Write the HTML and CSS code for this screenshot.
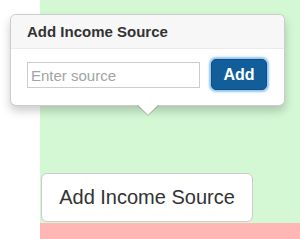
FILE: index.html
```html
<!DOCTYPE html>
<html lang="en">
<head>
  <meta charset="UTF-8">
  <title>Add Income Source</title>
  <link rel="stylesheet" href="styles.css">
</head>
<body>
  <div class="page">
    <div class="gutter"></div>
    <div class="main">
      <div class="stage">
        <button class="btn-open">Add Income Source</button>
      </div>
      <div class="strip"></div>
    </div>

    <!-- popover -->
    <div class="popover">
      <h3 class="popover-title">Add Income Source</h3>
      <div class="popover-content">
        <input type="text" class="source-input" placeholder="Enter source">
        <button class="btn-add">Add</button>
      </div>
      <div class="arrow"></div>
    </div>
  </div>
</body>
</html>
```

FILE: styles.css
```css
body { margin:0; font-family:"Liberation Sans", Arial, sans-serif; color:#333; background:#fff; }
.page { position:relative; display:flex; height:239px; overflow:hidden; }
.gutter { width:40px; flex:none; background:#fff; }
.main { flex:1; display:flex; flex-direction:column; }
.stage { height:223px; box-sizing:border-box; padding:173px 0 0 1px; background:#d4f7d4; }
.strip { flex:1; background:#ffb6b4; }

.btn-open { display:block; width:212px; height:49px; box-sizing:border-box; background:#fff; border:1px solid #ccc; border-radius:6px; font-family:inherit; font-size:20px; color:#333; padding:0; }

.popover { position:absolute; left:10px; top:14px; width:275px; box-sizing:border-box; background:#fff; border:1px solid rgba(0,0,0,.2); border-radius:6px; box-shadow:0 5px 10px rgba(0,0,0,.2); }
.popover-title { margin:0; padding:8px 16px; font-size:15px; line-height:17px; font-weight:bold; background:#f7f7f7; border-bottom:1px solid #ebebeb; border-radius:5px 5px 0 0; color:#333; }
.popover-content { display:flex; align-items:center; gap:11px; padding:10px 16px 15px; }
.source-input { width:173px; height:26px; box-sizing:border-box; border:1px solid #ccc; border-radius:0; padding:1px 3px 0; font-family:inherit; font-size:15px; color:#333; }
.source-input::placeholder { color:#a3a3a3; }
.btn-add { width:56px; height:31px; box-sizing:border-box; background:#125e9b; border:1px solid #0d4f86; border-radius:5px; color:#fff; font-family:inherit; font-size:16px; font-weight:bold; padding:0; box-shadow:0 0 2px 2px rgba(102,175,233,.7); }

.arrow, .arrow:after { position:absolute; width:0; height:0; border:solid transparent; }
.arrow { left:50%; bottom:-11px; margin-left:-11px; border-width:11px 11px 0; border-top-color:rgba(0,0,0,.25); }
.arrow:after { content:""; left:-10px; bottom:1px; border-width:10px 10px 0; border-top-color:#fff; }
```
